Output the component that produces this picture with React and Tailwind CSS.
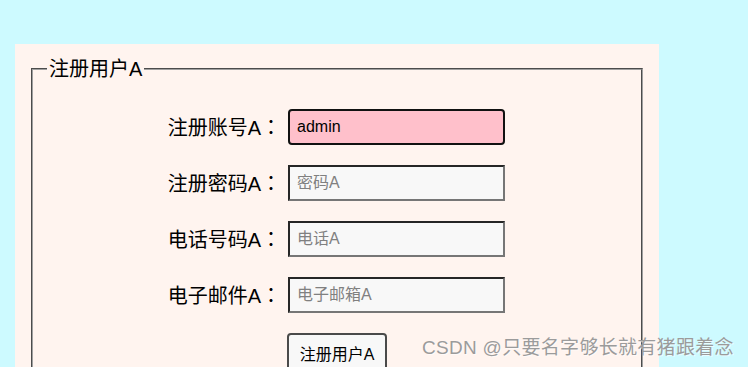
const font = { fontFamily: '"Liberation Sans", "Noto Sans CJK SC", sans-serif' };

function Row({ label, children }) {
  return (
    <div className="flex items-center gap-[7px]">
      <label className="w-[234px] text-right text-[20px] leading-[26px] text-black">
        {label}
        <span style={{ fontFamily: '"Noto Sans CJK TC", sans-serif' }}>：</span>
      </label>
      {children}
    </div>
  );
}

const plainInput =
  'w-[217px] h-[36px] border-2 border-t-[#262626] border-l-[#262626] border-r-[#767676] border-b-[#767676] bg-[#f8f8f8] pl-[7px] text-[16px] text-black outline-none placeholder:text-[#808080]';

export default function App() {
  return (
    <div className="relative min-h-screen bg-[#cdfaff] pt-[44px] pl-[15px]" style={font}>
      <div className="w-[644px] bg-[#fff4ef] px-4 pt-3 pb-10">
        <fieldset className="border-2 [border-style:groove] border-[#a0a0a0] px-[14px] pb-6">
          <legend className="px-[2px] text-[20px] leading-[26px] text-black">注册用户A</legend>
          <div className="mt-[27px] flex flex-col gap-[20px]">
            <Row label="注册账号A">
              <input
                defaultValue="admin"
                className="w-[217px] h-[36px] rounded-[4px] border-2 border-[#111] bg-[#ffc0cb] pl-[7px] text-[16px] text-black outline-none"
              />
            </Row>
            <Row label="注册密码A">
              <input placeholder="密码A" className={plainInput} />
            </Row>
            <Row label="电话号码A">
              <input placeholder="电话A" className={plainInput} />
            </Row>
            <Row label="电子邮件A">
              <input placeholder="电子邮箱A" className={plainInput} />
            </Row>
            <div className="flex gap-[6px]">
              <div className="w-[234px]" />
              <button className="w-[100px] h-[44px] rounded-[4px] border-2 border-[#4a4a4a] bg-[#f8f8f8] text-[16px] text-black">
                注册用户A
              </button>
            </div>
          </div>
        </fieldset>
      </div>
      <div className="absolute left-[422px] top-[336px] text-[19px] tracking-[0.3px] leading-[24px] text-[#9b9b9b] [text-shadow:1px_1px_0_rgba(255,255,255,0.6)]">
        CSDN @只要名字够长就有猪跟着念
      </div>
    </div>
  );
}
